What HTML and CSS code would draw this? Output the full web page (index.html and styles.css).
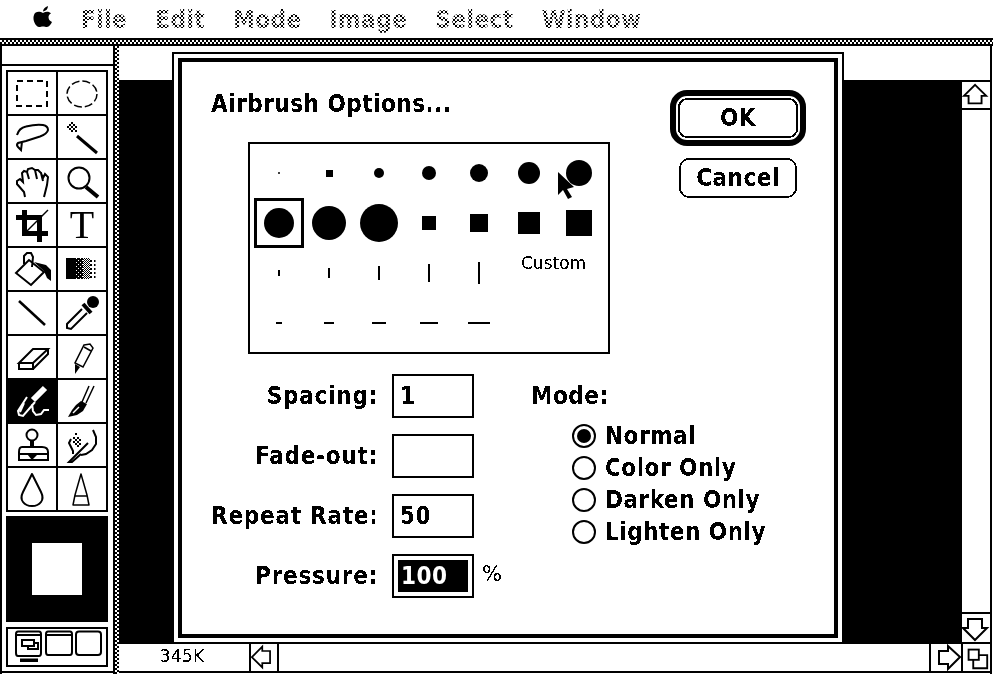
FILE: index.html
```html
<!DOCTYPE html>
<html lang="en">
<head>
<meta charset="utf-8">
<title>Airbrush Options</title>
<link rel="stylesheet" href="styles.css">
</head>
<body>
<svg class="defs" width="0" height="0" aria-hidden="true">
  <defs>
    <filter id="mono" x="0" y="0" width="100%" height="100%" color-interpolation-filters="sRGB">
      <feComponentTransfer><feFuncA type="discrete" tableValues="0 0 1 1"/></feComponentTransfer>
    </filter>
    <pattern id="d75" width="4" height="4" patternUnits="userSpaceOnUse"><rect width="4" height="4"/><rect x="0" y="0" width="1" height="1" fill="#fff"/><rect x="2" y="2" width="1" height="1" fill="#fff"/></pattern>
    <pattern id="d50" width="2" height="2" patternUnits="userSpaceOnUse"><rect width="1" height="1"/><rect x="1" y="1" width="1" height="1"/></pattern>
    <pattern id="d25" width="4" height="4" patternUnits="userSpaceOnUse"><rect width="2" height="2"/></pattern>
    <pattern id="d12" width="6" height="4" patternUnits="userSpaceOnUse"><rect width="1.5" height="2"/></pattern>
  </defs>
</svg>

<div class="screen">
  <header class="menubar">
    <svg class="apple" viewBox="0 0 20 22" width="20" height="22"><path d="M10 7C7 5 2 5 1 9c-2 5 2 12 5 12 1.500 0 2.500-.5 4-.5s2.500.5 4 .5c2 0 4-3 5-5-2.500-1-3.500-3-3.500-5 0-1.500 1-3 2.500-3.500C16.500 5.500 13 5 10 7Z"/><path d="M10 5.500C10 3 12 1 15 0c0 3-2 5-5 5.500Z"/></svg>
    <nav class="menus">
      <span class="menu">File</span>
      <span class="menu">Edit</span>
      <span class="menu">Mode</span>
      <span class="menu">Image</span>
      <span class="menu">Select</span>
      <span class="menu">Window</span>
    </nav>
  </header>
  <div class="rule-h"></div>

  <div class="workspace">
    <aside class="palette">
      <div class="palette-title"></div>
      <div class="tools">
        <div class="tool"><svg viewBox="0 0 48 42"><rect x="9" y="9" width="30" height="25" class="o dash"/></svg></div>
        <div class="tool"><svg viewBox="0 0 48 42"><ellipse cx="24" cy="22" rx="15" ry="13" class="o thin dash2"/></svg></div>

        <div class="tool"><svg viewBox="0 0 48 42"><path class="o" d="M9 19 Q11 12 18 10.500 Q28 8 35 9 Q40 10 40 14 Q39 18 32 20.500 L18 25 L10 27 Q8 29 10 31 L13 34 L14 26"/></svg></div>
        <div class="tool"><svg viewBox="0 0 48 42"><path class="o mid" d="M19 20 L39 37"/><path class="f crisp" d="M13 6h2v2h-2zM9 10h2v2H9zM17 10h2v2h-2zM13 10h2v2h-2zM11 8h2v2h-2zM15 8h2v2h-2zM11 12h2v2h-2zM15 12h2v2h-2zM13 14h2v2h-2zM17 14h2v2h-2z"/></svg></div>

        <div class="tool"><svg viewBox="0 0 48 42"><path class="o" d="M17 37 L16 32 L9 24 L9 21 L12 19 L15 22 L14 13 L16 11 L19 12 L20 9 L24 8 L27 10 L30 10 L33 13 L35 18 L37 14 L40 17 L39 25 L36 37 M19 12 L21 19 M27 10 L29 19 M33 13 L35 21"/></svg></div>
        <div class="tool"><svg viewBox="0 0 48 42"><circle cx="21" cy="18" r="10.500" class="o"/><path class="o thick" d="M28 27 L40 37"/></svg></div>

        <div class="tool"><svg viewBox="0 0 48 42"><path class="f crisp" d="M8 11h26v27h-5V16H19v11h21v5H14V16H8zM14 6h5v5h-5z"/><path class="o thin" d="M40 6 L19 27"/></svg></div>
        <div class="tool tool-letter">T</div>

        <div class="tool"><svg viewBox="0 0 48 42"><path class="o" d="M8 25 L21 12 L36 24 L23 37 Z M16 16 L16 8 L19 5 L23 5 L25 9 L24 19"/><path class="f" d="M26 14 L38 17 L43 22 L43 33 L39 30 L36 23 Z"/></svg></div>
        <div class="tool"><svg viewBox="0 0 48 42"><g class="crisp"><rect x="8" y="10" width="9" height="21"/><rect x="17" y="10" width="8" height="21" fill="url(#d75)"/><rect x="25" y="10" width="7" height="21" fill="url(#d50)"/><rect x="32" y="10" width="5" height="21" fill="url(#d25)"/><rect x="37" y="10" width="5" height="21" fill="url(#d12)"/></g></svg></div>

        <div class="tool"><svg viewBox="0 0 48 42"><path class="o heavy" d="M11 9 L37 33"/></svg></div>
        <div class="tool"><svg viewBox="0 0 48 42"><circle cx="35" cy="10" r="6" class="f"/><path class="o thick" d="M25 12 L33 21"/><path class="o" d="M24 17 L9 32 L9 36 L13 37 L29 21"/></svg></div>

        <div class="tool"><svg viewBox="0 0 48 42"><path class="o" d="M11 27 L25 13 L40 13 L25 27 Z M11 27 V33 H25 V27 M25 33 L40 18 V13"/></svg></div>
        <div class="tool"><svg viewBox="0 0 48 42"><path class="o thin" d="M26 9 L32 8 L35 12 L25 31 L17 27 Z"/><path class="o thin" d="M26 11 L33 15"/><path class="f" d="M17 28 L22 31 L17 38 Z"/></svg></div>

        <div class="tool tool-on"><svg viewBox="0 0 48 42"><path class="w thick6" d="M37 8 L25 20"/><path class="w" d="M19 17 L10 31 L11 35 L15 36 L27 22 M16 23 L12 32 M24 24 L25 31 L28 35 L33 34 L36 30 L41 30"/></svg></div>
        <div class="tool"><svg viewBox="0 0 48 42"><path class="o thin" d="M31 6 L24 22 M36 6 L28 23"/><path class="f" d="M23 21 L29 24 L25 31 L19 35 L10 37 L14 30 L18 25 Z"/><path class="w thin" d="M15 33 L21 27"/></svg></div>

        <div class="tool"><svg viewBox="0 0 48 42"><circle cx="24" cy="11" r="5.500" class="o"/><path class="o thick" d="M24 17 V24"/><path class="o" d="M14 23 H34 Q40 23 40 28 V36 H11 V28 Q11 23 14 23 M11 30 H40"/><path class="f" d="M19 30 H30 L24 36 Z"/></svg></div>
        <div class="tool"><svg viewBox="0 0 48 42"><path class="o" d="M35 6 L38 13 L38 20 L34 26 L28 30 L23 31 M30 19 L21 28 L11 38 L14 38 L23 30 M13 15 L11 19 L15 27 L15 30"/><path class="f crisp" d="M17 9h2v2h-2zM15 13h2v2h-2zM19 13h2v2h-2zM17 15h2v2h-2zM21 15h2v2h-2zM15 17h2v2h-2zM19 17h2v2h-2zM17 19h2v2h-2zM21 19h2v2h-2zM19 21h2v2h-2z"/></svg></div>

        <div class="tool"><svg viewBox="0 0 48 42"><path class="o round" d="M24 6 L15 24 Q12 30 15 34 Q18 38 24 38 Q30 38 33 34 Q36 30 33 24 Z"/></svg></div>
        <div class="tool"><svg viewBox="0 0 48 42"><path class="o round thin" d="M23 6 L17 27 L15 37 H31 L29 27 Z M17 28 H29"/></svg></div>
      </div>

      <div class="swatch"><div class="swatch-fg"></div></div>

      <div class="modes">
        <svg viewBox="0 0 98 36" width="98" height="36">
          <path class="o" d="M10 2.500 H31 Q33 2.500 33 5 V24 Q33 27 31 27 H10 Q8 27 8 24 V5 Q8 2.500 10 2.500 Z M8 6 H33 M14 11 H26 V17 H14 Z M20 17 V20 H30 V14 H26"/>
          <rect x="12" y="29.500" width="18" height="3.500" class="f"/>
          <path class="o" d="M40 2.500 H62 Q64 2.500 64 5 V23 Q64 26 62 26 H40 Q38 26 38 23 V5 Q38 2.500 40 2.500 Z M38 6 H64"/>
          <rect x="68" y="2.500" width="25" height="23.500" rx="3" class="o"/>
        </svg>
      </div>
    </aside>

    <div class="rule-v"></div>

    <main class="window">
      <div class="window-title"></div>
      <div class="window-body">
        <div class="canvas"></div>
        <div class="vscroll">
          <svg class="arrow-v" viewBox="0 0 28 28"><path class="o" d="M13 3 L25 15 H20 V23 H6 V15 H1 Z"/></svg>
          <div class="track"></div>
          <svg class="arrow-v arrow-down" viewBox="0 0 28 28"><path class="o" d="M13 26 L25 14 H20 V5 H6 V14 H1 Z"/></svg>
        </div>
      </div>
      <footer class="statusbar">
        <div class="doc-size">345K</div>
        <svg class="arrow-h arrow-left" viewBox="0 0 30 27"><path class="o" d="M1 13 L13 1 V6 H22 V20 H13 V25 Z"/></svg>
        <div class="hspace"></div>
        <svg class="arrow-h arrow-right" viewBox="0 0 30 27"><path class="o" d="M29 13 L17 2 V7 H8 V20 H17 V25 Z"/></svg>
        <svg class="resize" viewBox="0 0 29 27"><rect x="6" y="5" width="11" height="11" class="o"/><path class="o" d="M17 11 H26 V25 H11 V16"/></svg>
      </footer>
    </main>
  </div>

  <section class="dialog" aria-label="Airbrush Options">
    <div class="dialog-frame">
      <div class="dialog-main">
        <h1 class="title txt">Airbrush Options...</h1>
        <div class="brushes">
          <div class="cell"><i class="dot s2"></i></div>
          <div class="cell"><i class="sq s6"></i></div>
          <div class="cell"><i class="dot s10"></i></div>
          <div class="cell"><i class="dot s14"></i></div>
          <div class="cell"><i class="dot s18"></i></div>
          <div class="cell"><i class="dot s22"></i></div>
          <div class="cell"><i class="dot s26"></i></div>

          <div class="cell cell-on"><i class="dot s30"></i></div>
          <div class="cell"><i class="dot s34"></i></div>
          <div class="cell"><i class="dot s38"></i></div>
          <div class="cell"><i class="sq s14"></i></div>
          <div class="cell"><i class="sq s18"></i></div>
          <div class="cell"><i class="sq s22"></i></div>
          <div class="cell"><i class="sq s26"></i></div>

          <div class="cell"><i class="vl h6"></i></div>
          <div class="cell"><i class="vl h10"></i></div>
          <div class="cell"><i class="vl h14"></i></div>
          <div class="cell"><i class="vl h18"></i></div>
          <div class="cell"><i class="vl h22"></i></div>
          <div class="custom thin-txt">Custom</div>

          <div class="cell"><i class="hl w6"></i></div>
          <div class="cell"><i class="hl w10"></i></div>
          <div class="cell"><i class="hl w14"></i></div>
          <div class="cell"><i class="hl w18"></i></div>
          <div class="cell"><i class="hl w22"></i></div>
        </div>

        <div class="options">
          <div class="fields">
            <label class="lbl txt">Spacing:</label><div class="field"><span class="txt">1</span></div><span></span>
            <label class="lbl txt">Fade-out:</label><div class="field"></div><span></span>
            <label class="lbl txt">Repeat Rate:</label><div class="field"><span class="txt">50</span></div><span></span>
            <label class="lbl txt">Pressure:</label><div class="field field-on"><span class="sel txt">100</span></div><span class="pct thin-txt">%</span>
          </div>
          <div class="mode-group">
            <div class="mode-title txt">Mode:</div>
            <div class="radio"><span class="knob knob-on"></span><span class="txt">Normal</span></div>
            <div class="radio"><span class="knob"></span><span class="txt">Color Only</span></div>
            <div class="radio"><span class="knob"></span><span class="txt">Darken Only</span></div>
            <div class="radio"><span class="knob"></span><span class="txt">Lighten Only</span></div>
          </div>
        </div>
      </div>
      <div class="dialog-buttons">
        <div class="btn-default"><div class="btn-inner txt">OK</div></div>
        <div class="btn txt">Cancel</div>
      </div>
    </div>
  </section>

  <svg class="cursor" viewBox="0 0 18 29" width="18" height="29"><path d="M1 1 L1 24 L6 19 L11 28 L15 26 L10 18 L17 16 Z"/></svg>
</div>
</body>
</html>
```
FILE: styles.css
```css
* { box-sizing: border-box; }
html, body { margin: 0; padding: 0; background: #fff; }
.defs { position: absolute; }
.screen {
  position: relative;
  width: 993px;
  height: 674px;
  overflow: hidden;
  display: flex;
  flex-direction: column;
  background: #fff;
  color: #000;
  font-family: "DejaVu Sans Condensed", "DejaVu Sans", sans-serif;
  font-stretch: condensed;
}

/* shared text looks */
.txt {
  font-family: "DejaVu Sans Condensed", "DejaVu Sans", sans-serif;
  font-stretch: condensed;
  font-weight: 700;
  font-size: 24px;
  letter-spacing: 0.500px;
  filter: url(#mono);
}
.thin-txt {
  font-family: "DejaVu Sans", sans-serif;
  font-stretch: normal;
  font-weight: 400;
  filter: url(#mono);
}

/* menu bar */
.menubar {
  height: 38px;
  flex: none;
  display: flex;
  align-items: flex-start;
  padding: 6px 0 0 33px;
}
.apple { flex: none; }
.menus {
  display: flex;
  margin: 1px 0 0 28px;
  gap: 28px;
}
.menu {
  font-weight: 700;
  font-size: 24px;
  line-height: 26px;
  letter-spacing: 0.500px;
  -webkit-mask-image: conic-gradient(#000 25%, transparent 0 50%, #000 0 75%, transparent 0);
  mask-image: conic-gradient(#000 25%, transparent 0 50%, #000 0 75%, transparent 0);
  -webkit-mask-size: 4px 4px;
  mask-size: 4px 4px;
}
.rule-h {
  height: 8px;
  flex: none;
  border-top: 2px solid #000;
  border-bottom: 2px solid #000;
  background: conic-gradient(#000 25%, #fff 0 50%, #000 0 75%, #fff 0) 0 0 / 4px 4px;
}

/* workspace */
.workspace { flex: 1; display: flex; min-height: 0; }
.palette {
  width: 113px;
  flex: none;
  border-left: 2px solid #000;
  display: flex;
  flex-direction: column;
  padding-bottom: 3px;
  position: relative;
}
.palette::after {
  content: "";
  position: absolute;
  left: -2px;
  right: 0;
  bottom: 1px;
  height: 2px;
  background: #000;
}
.palette-title {
  height: 20px;
  flex: none;
  border-bottom: 2px solid #000;
}
.tools {
  margin: 4px 0 0 4px;
  width: 102px;
  display: grid;
  grid-template-columns: 48px 48px;
  grid-auto-rows: 42px;
  gap: 2px;
  padding: 2px;
  background: #000;
}
.tool { background: #fff; }
.tool svg { display: block; width: 48px; height: 42px; }
.tool-on { background: #000; }
.tool-letter {
  font-family: "Liberation Serif", serif;
  font-stretch: normal;
  font-size: 40px;
  line-height: 42px;
  text-align: center;
  filter: url(#mono);
}

.o { fill: none; stroke: #000; stroke-width: 2; stroke-linejoin: miter; }
.f { fill: #000; stroke: none; }
.w { fill: none; stroke: #fff; stroke-width: 2; }
.thick { stroke-width: 4; }
.mid { stroke-width: 3; }
.thick6 { stroke-width: 6; }
.thin { stroke-width: 1.5; }
.heavy { stroke-width: 2.500; }
.round { stroke-linejoin: round; }
.crisp { shape-rendering: crispEdges; }
.dash { stroke-dasharray: 6 4; shape-rendering: crispEdges; }
.dash2 { stroke-dasharray: 8 3; }

.swatch {
  margin: 4px 0 0 4px;
  width: 102px;
  height: 106px;
  background: #000;
  display: flex;
  align-items: center;
  justify-content: center;
}
.swatch-fg { width: 50px; height: 52px; background: #fff; }
.modes {
  margin: 5px 0 0 4px;
  width: 102px;
  height: 40px;
  border: 2px solid #000;
}
.modes svg { display: block; }

.rule-v {
  width: 6px;
  flex: none;
  border-left: 2px solid #000;
  background: conic-gradient(#000 25%, #fff 0 50%, #000 0 75%, #fff 0) 0 0 / 4px 4px;
}

/* document window */
.window {
  flex: 1;
  min-width: 0;
  margin-right: 1px;
  display: flex;
  flex-direction: column;
  border-right: 2px solid #000;
}
.window-title { height: 34px; flex: none; }
.window-body { flex: 1; min-height: 0; display: flex; }
.canvas { flex: 1; background: #000; }
.vscroll {
  width: 28px;
  flex: none;
  display: flex;
  flex-direction: column;
  border-top: 2px solid #000;
}
.arrow-v { display: block; height: 28px; width: 28px; flex: none; border-bottom: 2px solid #000; }
.arrow-down { border-bottom: 0; border-top: 2px solid #000; height: 30px; }
.track { flex: 1; }
.statusbar {
  height: 31px;
  flex: none;
  display: flex;
  align-items: stretch;
  border-top: 2px solid #000;
  border-bottom: 2px solid #000;
  margin-bottom: 1px;
}
.doc-size {
  width: 126px;
  flex: none;
  margin-right: 4px;
  text-align: center;
  font-family: "DejaVu Sans", sans-serif;
  font-stretch: normal;
  font-size: 17.500px;
  line-height: 25px;
  filter: url(#mono);
}
.arrow-h { width: 30px; height: 27px; flex: none; display: block; }
.arrow-left { border-left: 2px solid #000; border-right: 2px solid #000; }
.arrow-right { border-left: 2px solid #000; width: 32px; }
.hspace { flex: 1; }
.resize { width: 29px; height: 27px; flex: none; display: block; border-left: 2px solid #000; }

/* modal dialog, floats over the window */
.dialog {
  position: absolute;
  left: 172px;
  top: 52px;
  width: 672px;
  height: 592px;
  background: #fff;
  border: 2px solid #000;
  padding: 4px;
}
.dialog-frame {
  height: 100%;
  border: 4px solid #000;
  display: grid;
  grid-template-columns: 459px 136px;
  padding: 28px 0 0 29px;
}
.title {
  margin: 0 0 26px;
  font-size: 24px;
  line-height: 28px;
  height: 26px;
}
.brushes {
  margin-left: 37px;
  width: 362px;
  height: 212px;
  border: 2px solid #000;
  padding: 4px;
  display: grid;
  grid-template-columns: repeat(7, 50px);
  grid-auto-rows: 50px;
}
.cell { display: flex; align-items: center; justify-content: center; }
.cell-on { border: 3px solid #000; }
.dot { display: block; border-radius: 50%; background: #000; }
.sq { display: block; background: #000; }
.s2 { width: 2px; height: 2px; }
.s6 { width: 7px; height: 7px; }
.s10 { width: 10px; height: 10px; }
.s14 { width: 14px; height: 14px; }
.s18 { width: 18px; height: 18px; }
.s22 { width: 22px; height: 22px; }
.s26 { width: 26px; height: 26px; }
.s30 { width: 30px; height: 30px; }
.s34 { width: 34px; height: 34px; }
.s38 { width: 38px; height: 38px; }
.vl { display: block; width: 2px; background: #000; }
.hl { display: block; height: 2px; background: #000; }
.h6 { height: 6px; }
.h10 { height: 10px; }
.h14 { height: 14px; }
.h18 { height: 18px; }
.h22 { height: 22px; }
.w6 { width: 6px; }
.w10 { width: 10px; }
.w14 { width: 14px; }
.w18 { width: 18px; }
.w22 { width: 22px; }
.custom {
  grid-column: span 2;
  padding: 5px 0 0 17px;
  font-size: 17px;
  line-height: 20px;
  white-space: nowrap;
}

.options { display: flex; margin-top: 20px; }
.fields {
  width: 320px;
  flex: none;
  display: grid;
  grid-template-columns: 167px 82px auto;
  grid-auto-rows: 44px;
  column-gap: 14px;
  row-gap: 16px;
  align-items: center;
}
.lbl { text-align: right; white-space: nowrap; letter-spacing: 0.750px; }
.field {
  height: 44px;
  border: 2px solid #000;
  padding-left: 6px;
  line-height: 40px;
  white-space: nowrap;
}
.field-on { padding: 4px; line-height: 32px; }
.sel {
  display: block;
  height: 32px;
  background: #000;
  color: #fff;
  padding-left: 3px;
}
.pct { font-size: 21px; margin-left: -6px; padding-bottom: 4px; }
.mode-title { height: 44px; line-height: 44px; margin-bottom: 2px; }
.radio {
  height: 32px;
  display: flex;
  align-items: center;
  white-space: nowrap;
  padding-left: 41px;
  gap: 9px;
}
.knob {
  width: 24px;
  height: 24px;
  flex: none;
  border: 2px solid #000;
  border-radius: 50%;
  display: flex;
  align-items: center;
  justify-content: center;
}
.knob-on::before {
  content: "";
  width: 14px;
  height: 14px;
  border-radius: 50%;
  background: #000;
}

.dialog-buttons { display: flex; flex-direction: column; align-items: center; gap: 12px; }
.btn-default {
  width: 136px;
  height: 56px;
  border: 6px solid #000;
  border-radius: 17px;
  padding: 2px;
}
.btn-inner {
  height: 100%;
  border: 2px solid #000;
  border-radius: 9px;
  text-align: center;
  line-height: 36px;
}
.btn {
  width: 118px;
  height: 40px;
  border: 2px solid #000;
  border-radius: 10px;
  text-align: center;
  line-height: 36px;
}

.cursor { position: absolute; left: 557px; top: 171px; }
.cursor path { fill: #000; }
```
